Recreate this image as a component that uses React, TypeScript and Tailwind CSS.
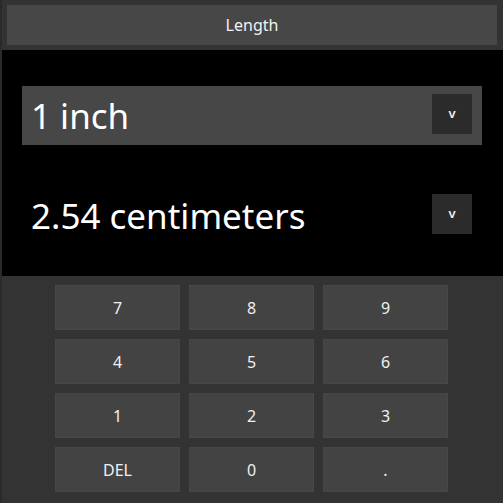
import React from "react";

const keys = ["7", "8", "9", "4", "5", "6", "1", "2", "3", "DEL", "0", "."];

function Dropdown() {
  return (
    <div className="w-[40px] h-[40px] bg-[#2b2b2b] flex items-center justify-center text-[13px] text-[#f0f0f0] font-semibold leading-none pb-[2px]">
      v
    </div>
  );
}

export default function App() {
  return (
    <div
      className="w-[503px] h-[503px] bg-[#2a2a2a] pl-[2px] flex"
      style={{ fontFamily: '"Noto Sans", "Open Sans", sans-serif' }}
    >
      <div className="flex-1 flex flex-col bg-[#333333]">
        <div className="pl-[5px] pr-[6px] pt-[5px] h-[50px]">
          <div className="h-[40px] bg-[#474747] flex items-center justify-center text-[16px] text-[#f2f2f2]">
            Length
          </div>
        </div>
        <div className="h-[226px] bg-black pt-[36px] pl-[20px] pr-[21px] flex flex-col gap-[41px]">
          <div className="h-[59px] bg-[#474747] flex items-start justify-between pl-[9px] pr-[10px] pt-[8px]">
            <span className="text-[35px] leading-[40px] text-white mt-[2px]">1 inch</span>
            <Dropdown />
          </div>
          <div className="h-[59px] flex items-start justify-between pl-[9px] pr-[10px] pt-[8px]">
            <span className="text-[35px] leading-[40px] text-white mt-[2px]">2.54 centimeters</span>
            <Dropdown />
          </div>
        </div>
        <div className="flex-1 pt-[9px] pl-[53px]">
          <div className="grid grid-cols-[125px_125px_125px] auto-rows-[45px] gap-[9px]">
            {keys.map((k) => (
              <div
                key={k}
                className="bg-[#434343] border border-[#474747] flex items-center justify-center text-[16px] text-[#f0f0f0]"
              >
                {k}
              </div>
            ))}
          </div>
        </div>
      </div>
    </div>
  );
}
